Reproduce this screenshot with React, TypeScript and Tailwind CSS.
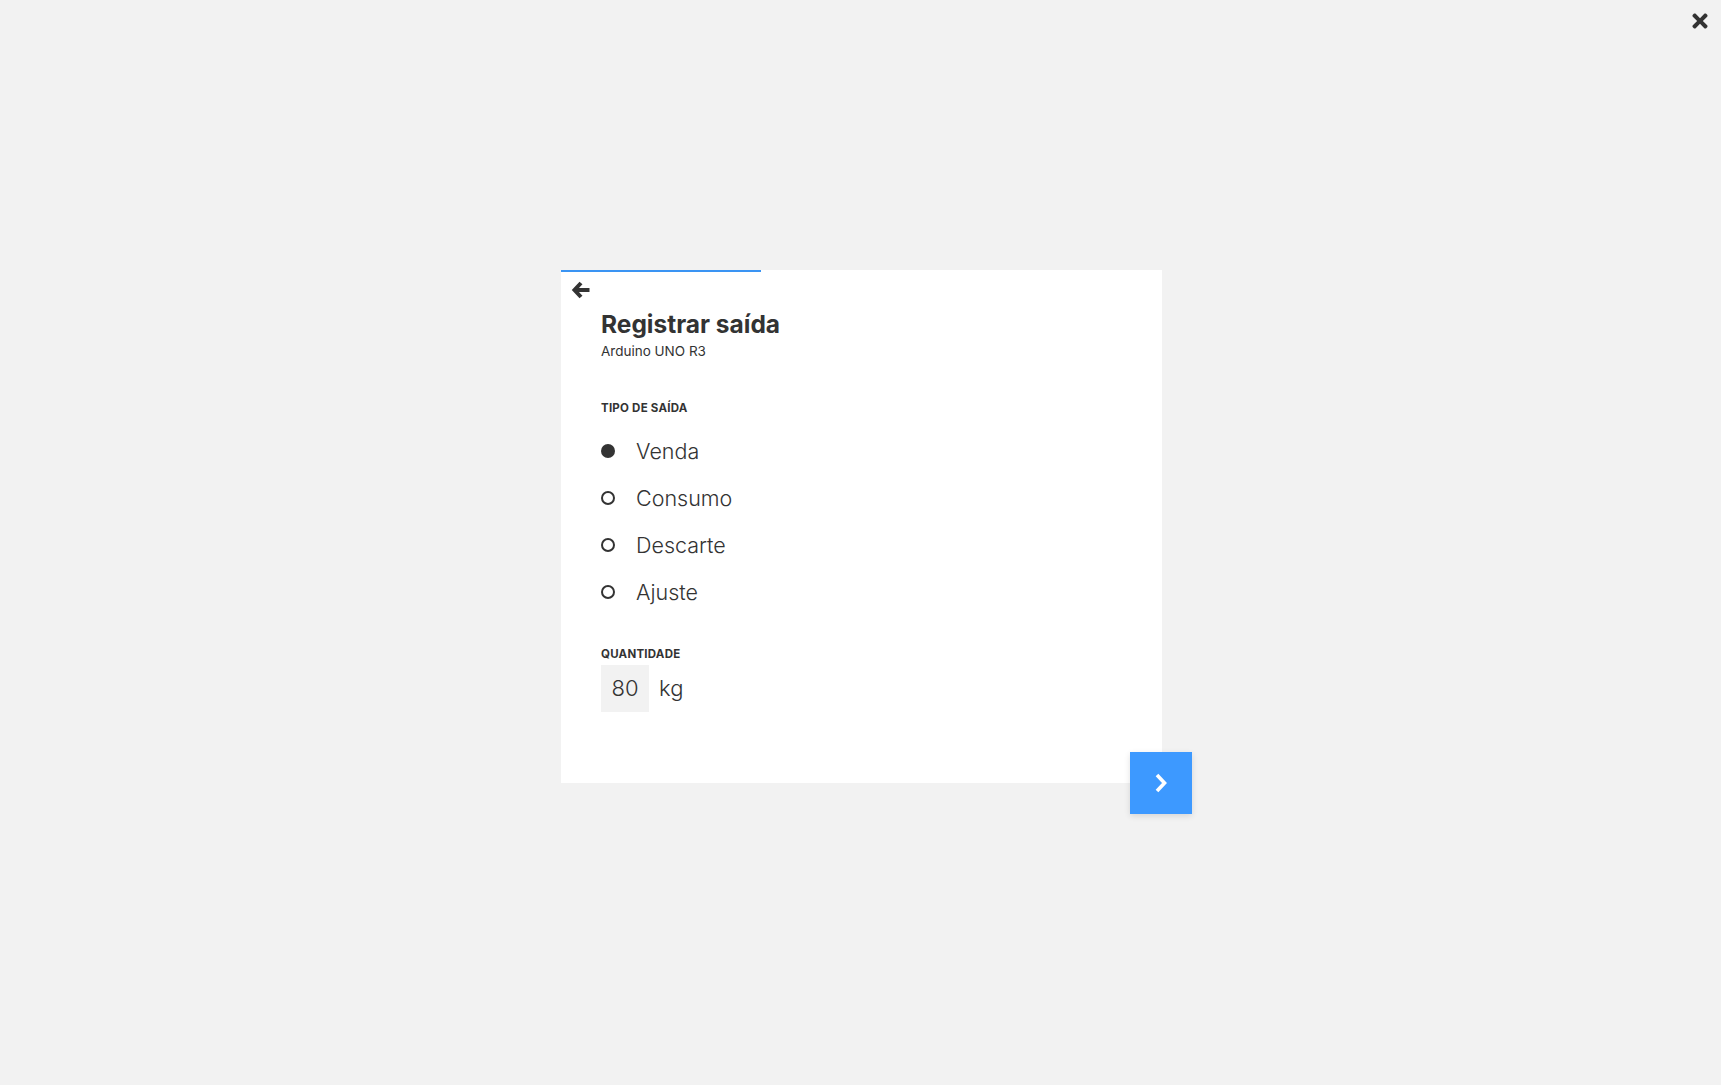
import { FaTimes } from "react-icons/fa";

// ── Data ──────────────────────────────────────────────────────────────────────

const OPTIONS = ["Venda", "Consumo", "Descarte", "Ajuste"];

// ── Icons ─────────────────────────────────────────────────────────────────────

function BackArrow() {
  return (
    <svg width="20" height="20" viewBox="0 0 20 20" fill="none">
      <path
        d="M10 3 L3.5 10 L10 17 M4 10 H18.5"
        stroke="#333"
        strokeWidth="4"
        strokeLinecap="butt"
        strokeLinejoin="miter"
      />
    </svg>
  );
}

function Chevron() {
  return (
    <svg width="16" height="22" viewBox="0 0 16 22" fill="none">
      <path
        d="M4 3 L11.5 11 L4 19"
        stroke="white"
        strokeWidth="3.6"
        strokeLinejoin="miter"
      />
    </svg>
  );
}

// ── Pieces ────────────────────────────────────────────────────────────────────

function Radio({ label, checked }: { label: string; checked?: boolean }) {
  return (
    <div className="flex h-[47px] items-center">
      {checked ? (
        <span className="h-[14px] w-[14px] rounded-full bg-[#333]" />
      ) : (
        <span className="h-[14px] w-[14px] rounded-full border-2 border-[#333]" />
      )}
      <span className="ml-[21px] text-[21.5px] font-light leading-[28px] text-[#333]">
        {label}
      </span>
    </div>
  );
}

function FieldLabel({ children }: { children: string }) {
  return (
    <p className="text-[11.5px] font-bold uppercase leading-[14px] tracking-[0.02em] text-[#333]">
      {children}
    </p>
  );
}

// ── App ───────────────────────────────────────────────────────────────────────

export default function App() {
  return (
    <div
      className="relative flex h-[1085px] w-full items-center justify-center bg-[#f2f2f2] text-[#333]"
      style={{ fontFamily: "Inter, Roboto, sans-serif" }}
    >
      {/* Close */}
      <button className="absolute right-[10px] top-[10px] text-[#333]">
        <FaTimes className="h-[22px] w-[22px]" />
      </button>

      <div className="relative mb-[33px] ml-[2px] h-[513px] w-[601px] bg-white">
        {/* Progress */}
        <div className="absolute left-0 top-0 h-[2px] w-[200px] bg-[#3a94f3]" />

        <div className="pl-[10px] pt-[10px]">
          <BackArrow />
        </div>

        <div className="pl-[40px]">
          <h1 className="mt-[10px] text-[24.5px] font-bold leading-[29px] text-[#333]">
            Registrar saída
          </h1>
          <p className="mt-[4px] text-[13.5px] leading-[16px] text-[#333]">
            Arduino UNO R3
          </p>

          <div className="mt-[42px]">
            <FieldLabel>Tipo de saída</FieldLabel>
          </div>
          <div className="mt-[13px]">
            {OPTIONS.map((o, i) => (
              <Radio key={o} label={o} checked={i === 0} />
            ))}
          </div>

          <div className="mt-[31px]">
            <FieldLabel>Quantidade</FieldLabel>
          </div>
          <div className="mt-[4px] flex items-center">
            <div className="flex h-[47px] w-[48px] items-center justify-center bg-[#f2f2f2] text-[22px] font-light text-[#333]">
              80
            </div>
            <span className="ml-[10px] text-[22px] font-light text-[#333]">kg</span>
          </div>
        </div>

        {/* Next */}
        <button className="absolute bottom-[-31px] right-[-30px] flex h-[62px] w-[62px] items-center justify-center bg-[#3d99ff] shadow-[0_2px_6px_rgba(0,0,0,0.12)]">
          <Chevron />
        </button>
      </div>
    </div>
  );
}
